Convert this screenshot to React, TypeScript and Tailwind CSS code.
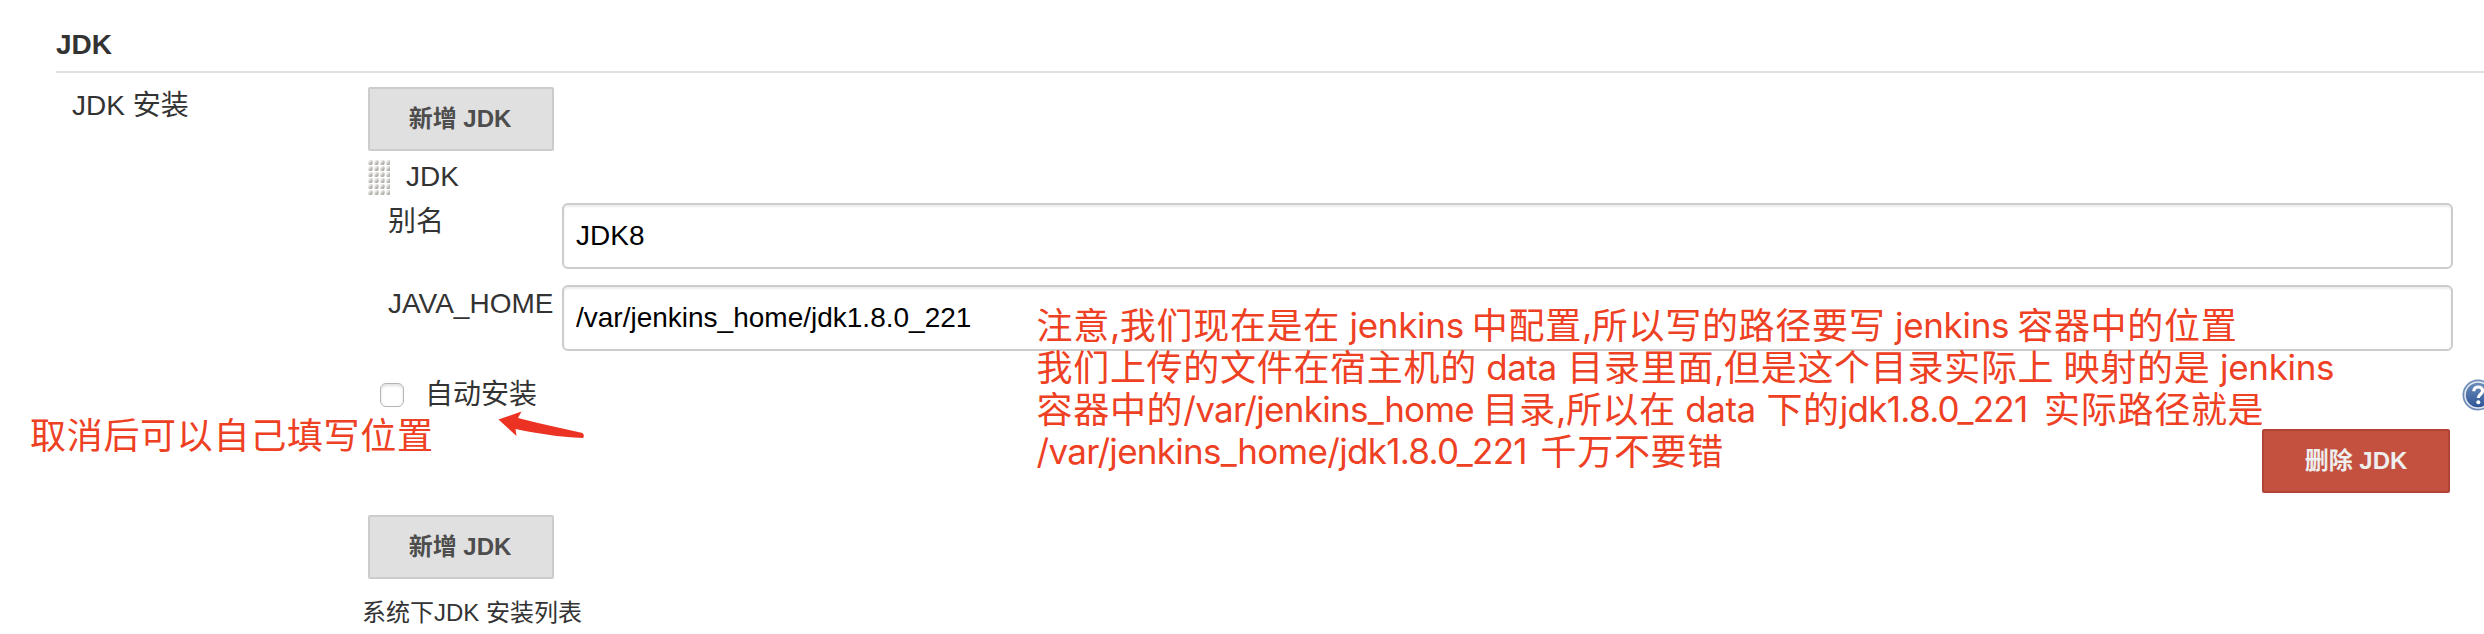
import type { ReactNode } from "react";

function AddButton() {
  return (
    <button className="flex h-16 w-[186px] items-center justify-center rounded-[2px] border-2 border-[#ccc] bg-[#e0e0e0] pr-0.5 text-2xl font-bold text-[#4d4d4d]">
      新增 JDK
    </button>
  );
}

function Field({ label, value }: { label: string; value: string }) {
  return (
    <div className="flex">
      <label className="w-[194px] shrink-0 pt-[3px] pl-5 leading-8 whitespace-nowrap">{label}</label>
      <input
        defaultValue={value}
        className="h-[66px] w-[1892px] rounded-md border-2 border-[#ccc] bg-white px-3 text-[28px] text-black shadow-[inset_0_2px_2px_rgba(0,0,0,0.075)] outline-none"
      />
    </div>
  );
}

function Grip() {
  return (
    <svg className="h-9 w-[22px]" viewBox="0 0 22 36">
      <defs>
        <linearGradient id="dot" x1="0" y1="0" x2="1" y2="1">
          <stop offset="0.25" stopColor="#f2f1ef" />
          <stop offset="0.7" stopColor="#b0afa9" />
        </linearGradient>
      </defs>
      {[0, 1, 2, 3, 4, 5].map((r) =>
        [0, 1, 2, 3].map((c) => (
          <rect key={`${r}-${c}`} x={c * 6} y={r * 6 + 1} width="4.6" height="5" rx="1.4" fill="url(#dot)" />
        )),
      )}
    </svg>
  );
}

function HelpIcon() {
  return (
    <svg className="absolute top-[379px] left-[2462px] h-8 w-8" viewBox="0 0 32 32">
      <defs>
        <linearGradient id="help" x1="0" y1="0" x2="0" y2="1">
          <stop offset="0" stopColor="#6d8cba" />
          <stop offset="1" stopColor="#2d5596" />
        </linearGradient>
      </defs>
      <circle cx="16" cy="16" r="15.5" fill="#6f8bb8" />
      <circle cx="16" cy="16" r="13.8" fill="#e3e9f2" />
      <circle cx="16" cy="16" r="12.2" fill="url(#help)" />
      <path d="M11.800 12.200c0-5.600 8.800-5.400 8.800-.4 0 3.400-4.300 3.400-4.300 7.200" fill="none" stroke="#fff" strokeWidth="3.200" />
      <circle cx="16.300" cy="23.200" r="2" fill="#fff" />
    </svg>
  );
}

function Zh({ children }: { children: ReactNode }) {
  return <span className="align-[-1px] tracking-[0.7px]">{children}</span>;
}

function Comma() {
  return <span className="inline-block w-[9.9px]">,</span>;
}

function Jenkins() {
  return <span className="inline-block w-[131.8px] text-[35px] tracking-[-0.3px]"> jenkins </span>;
}

function Data() {
  return <span className="inline-block w-[90.4px] text-[35px] tracking-[-0.5px]"> data </span>;
}

function Notes() {
  return (
    <div className="absolute top-[304px] left-[1036.500px] font-[Inter,'Noto_Sans_CJK_SC',sans-serif] text-[36px] leading-[42px] whitespace-pre text-[#ee4023]">
      <p className="h-[42px]"><Zh>注意</Zh><Comma /><Zh>我们现在是在</Zh><Jenkins /><Zh>中配置</Zh><Comma /><Zh>所以写的路径要写</Zh><Jenkins /><Zh>容器中的位置</Zh></p>
      <p className="h-[42px]"><Zh>我们上传的文件在宿主机的</Zh><Data /><Zh>目录里面</Zh><Comma /><Zh>但是这个目录实际上</Zh><span className="inline-block w-[9.300px]"> </span><Zh>映射的是</Zh><Jenkins /></p>
      <p className="h-[42px]"><Zh>容器中的</Zh><span className="inline-block w-[299.300px] text-[35px] tracking-[-0.7px]">/var/jenkins_home </span><Zh>目录</Zh><Comma /><Zh>所以在</Zh><Data /><Zh>下的</Zh><span className="inline-block w-[204.300px] text-[35px] tracking-[-0.7px]">jdk1.8.0_221 </span><Zh>实际路径就是</Zh></p>
      <p className="h-[42px]"><span className="inline-block w-[504px] text-[35px] tracking-[-0.7px]">/var/jenkins_home/jdk1.8.0_221 </span><Zh>千万不要错</Zh></p>
    </div>
  );
}

export default function App() {
  return (
    <main className="relative h-[634px] w-[2484px] overflow-hidden bg-white pl-14 font-['Liberation_Sans','Noto_Sans_CJK_SC',sans-serif] text-[28px] text-[#333]">
      <h2 className="border-b-2 border-[#e0e0e0] pt-[29px] pb-2.5 leading-8 font-bold">JDK</h2>
      <div className="flex">
        <div className="w-[312px] shrink-0 pt-[17px] pl-4 leading-8">JDK 安装</div>
        <div className="w-[2085px] shrink-0 pt-3.5">
          <AddButton />
          <div className="mt-2 mb-2 flex h-9 items-center gap-4 leading-8">
            <Grip />
            <span>JDK</span>
          </div>
          <div className="flex flex-col gap-4">
            <Field label="别名" value="JDK8" />
            <Field label="JAVA_HOME" value="/var/jenkins_home/jdk1.8.0_221" />
          </div>
          <label className="mt-7 flex h-8 items-center gap-[21px] pl-3 leading-8">
            <input
              type="checkbox"
              className="h-6 w-6 appearance-none rounded-md border-[1.5px] border-[#b4b4b4] bg-white shadow-[inset_0_2px_3px_rgba(0,0,0,0.12)]"
            />
            自动安装
          </label>
          <div className="mt-[18px] flex justify-end pr-[3px]">
            <button className="flex h-16 w-[188px] items-center justify-center rounded-[2px] border-2 border-[#b04434] bg-[#c4513f] text-2xl font-bold text-[#eee]">
              删除 JDK
            </button>
          </div>
          <div className="mt-[22px]">
            <AddButton />
          </div>
          <p className="mt-5 -ml-1.5 text-2xl leading-7">系统下JDK 安装列表</p>
        </div>
      </div>
      <HelpIcon />
      <Notes />
      <p className="absolute top-[415px] left-[30px] font-[Inter,'Noto_Sans_CJK_SC',sans-serif] text-[36px] leading-[42px] tracking-[0.7px] whitespace-nowrap text-[#ee4023]">
        取消后可以自己填写位置
      </p>
      <svg className="absolute top-[408px] left-[496px] h-8 w-[90px]" viewBox="0 0 90 32">
        <path d="M2.500 11.500 L25.500 3.500 L22 10 C45 16 66 20 86.500 25 Q89 27.500 87 30 C62 29 42 25.500 19.500 21 L20.500 28 Z" fill="#ec3323" />
      </svg>
    </main>
  );
}
